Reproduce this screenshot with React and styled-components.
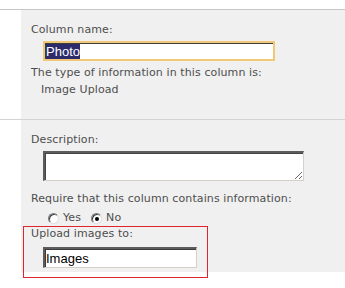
import React from 'react';
import styled, { createGlobalStyle } from 'styled-components';

const GlobalStyle = createGlobalStyle`
  html, body {
    margin: 0;
    padding: 0;
    background: #fff;
  }
  body {
    font-family: "DejaVu Sans", Tahoma, sans-serif;
    font-size: 11px;
    letter-spacing: 0.1px;
  }
`;

const Page = styled.div`
  position: relative;
  width: 345px;
  height: 288px;
  overflow: hidden;
`;

const TopStrip = styled.div`
  height: 9px;
  border-bottom: 1px solid #c6c6c6;
`;

const Section = styled.div`
  display: flex;
  border-top: ${p => (p.divided ? '1px solid #d3d3d3' : 'none')};
`;

const Gutter = styled.div`
  width: 21px;
  flex-shrink: 0;
`;

const Panel = styled.div`
  flex: 1;
  background: #f0f0f0;
  height: ${p => p.h}px;
  padding: ${p => p.pt}px 0 0 10px;
  box-sizing: border-box;
  display: flex;
  flex-direction: column;
  align-items: flex-start;
`;

const Label = styled.div`
  color: #4e4e4e;
  line-height: 14px;
  margin-top: ${p => p.mt || 0}px;
  padding-left: ${p => p.indent || 0}px;
  white-space: nowrap;
`;

const FieldBox = styled.div`
  box-sizing: border-box;
  width: ${p => p.w}px;
  height: ${p => p.h}px;
  margin: ${p => p.mt || 0}px 0 0 12px;
  background: #fff;
  border-style: solid;
  border-width: 2px;
  border-color: ${p => (p.focused ? '#f0c878' : '#5c5c5c #d4d0c8 #d4d0c8 #5c5c5c')};
  border-right-width: ${p => (p.focused ? 2 : 1)}px;
  border-bottom-width: ${p => (p.focused ? 2 : 1)}px;
  box-shadow: inset 1px 1px 0 #3c3c3c;
  font-family: "Liberation Sans", Arial, sans-serif;
  font-size: 13px;
  letter-spacing: 0;
  color: #000;
  display: flex;
  align-items: center;
  padding-left: 1px;
`;

const Selected = styled.span`
  background: #2c2c6c;
  color: #fff;
  line-height: 15px;
`;

const TextArea = styled.textarea`
  box-sizing: border-box;
  width: 261px;
  height: 30px;
  margin: 4px 0 0 12px;
  border-style: solid;
  border-width: 2px 1px 1px 2px;
  border-color: #5c5c5c #d4d0c8 #d4d0c8 #5c5c5c;
  box-shadow: inset 1px 1px 0 #444;
  background: #fff;
  padding: 0;
  outline: none;
  display: block;
`;

const RadioRow = styled.div`
  display: flex;
  align-items: center;
  margin: 5px 0 0 17px;
  height: 14px;
  color: #4e4e4e;
`;

const RadioItem = styled.label`
  display: flex;
  align-items: center;
  gap: 4px;
  line-height: 14px;
  margin-right: 10px;
`;

const RadioDot = styled.span`
  width: 11px;
  height: 11px;
  border-radius: 50%;
  box-sizing: border-box;
  background: #fff;
  border: 1px solid;
  border-color: #7a7a7a #e0e0e0 #e0e0e0 #7a7a7a;
  box-shadow: inset 1px 1px 0 #404040;
  position: relative;

  &::after {
    content: '';
    display: ${p => (p.checked ? 'block' : 'none')};
    position: absolute;
    left: 3px;
    top: 3px;
    width: 4px;
    height: 4px;
    border-radius: 50%;
    background: #000;
  }
`;

const Callout = styled.div`
  position: absolute;
  left: 23px;
  top: 226px;
  width: 185px;
  height: 52px;
  box-sizing: border-box;
  border: 1px solid #e0242c;
  pointer-events: none;
`;

export default function App() {
  return (
    <>
      <GlobalStyle />
      <Page>
        <TopStrip />
        <Section>
          <Gutter />
          <Panel h={109} pt={13}>
            <Label>Column name:</Label>
            <FieldBox focused w={232} h={20} mt={4}>
              <Selected>Photo</Selected>
            </FieldBox>
            <Label mt={5}>The type of information in this column is:</Label>
            <Label mt={3} indent={10}>Image Upload</Label>
          </Panel>
        </Section>
        <Section divided>
          <Gutter />
          <Panel h={152} pt={13}>
            <Label>Description:</Label>
            <TextArea />
            <Label mt={11}>Require that this column contains information:</Label>
            <RadioRow>
              <RadioItem><RadioDot />Yes</RadioItem>
              <RadioItem><RadioDot checked />No</RadioItem>
            </RadioRow>
            <Label mt={2}>Upload images to:</Label>
            <FieldBox w={154} h={21} mt={6}>Images</FieldBox>
          </Panel>
        </Section>
        <Callout />
      </Page>
    </>
  );
}
